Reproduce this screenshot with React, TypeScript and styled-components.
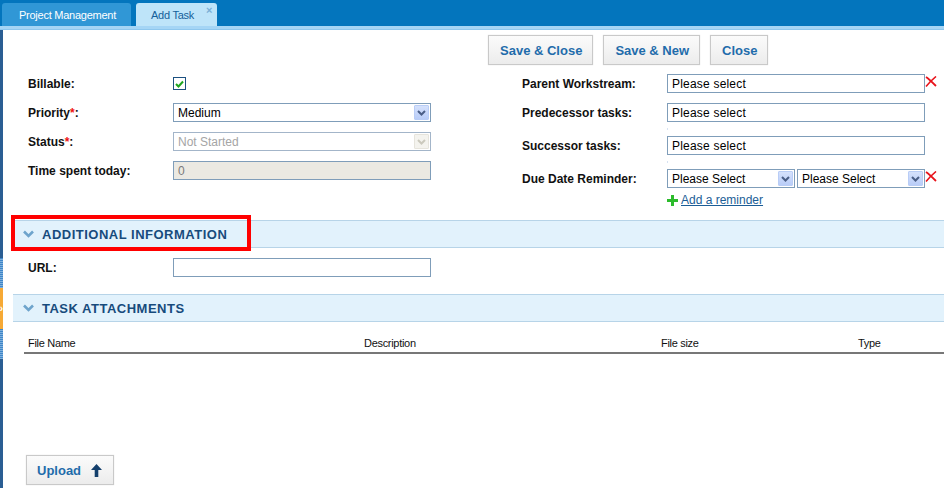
import styled, { createGlobalStyle } from 'styled-components';

const GlobalStyle = createGlobalStyle`
  html, body {
    margin: 0;
    padding: 0;
    background: #ffffff;
    font-family: "Liberation Sans", Arial, sans-serif;
  }
`;

export default function App() {
  return (
    <Page>
      <GlobalStyle />
      <TabBar>
        <Tab>Project Management</Tab>
        <Tab active>
          Add Task
          <TabClose>×</TabClose>
        </Tab>
      </TabBar>
      <TabBand />

      <Body>
        <LeftStrip>
          <SplitterHandle>
            <DottedGrip />
            <OrangeGrip>
              <GripArrow>›</GripArrow>
            </OrangeGrip>
            <DottedGrip />
          </SplitterHandle>
        </LeftStrip>

        <Content>
          <ButtonBar>
            <ActionButton>Save &amp; Close</ActionButton>
            <ActionButton>Save &amp; New</ActionButton>
            <ActionButton>Close</ActionButton>
          </ButtonBar>

          <FormGrid>
            <FormColumn>
              <FieldRow>
                <Label>Billable:</Label>
                <CheckBox>
                  <svg width="9" height="8" viewBox="0 0 9 8">
                    <path d="M1 4 L3.5 6.5 L8 1.5" stroke="#1fa51f" strokeWidth="2" fill="none" />
                  </svg>
                </CheckBox>
              </FieldRow>
              <FieldRow>
                <Label>
                  Priority<Required>*</Required>:
                </Label>
                <SelectBox width={258}>
                  <SelectText>Medium</SelectText>
                  <SelectArrow>
                    <Chevron />
                  </SelectArrow>
                </SelectBox>
              </FieldRow>
              <FieldRow>
                <Label>
                  Status<Required>*</Required>:
                </Label>
                <SelectBox width={258} disabled>
                  <SelectText disabled>Not Started</SelectText>
                  <SelectArrow disabled>
                    <Chevron color="#cbc9bd" />
                  </SelectArrow>
                </SelectBox>
              </FieldRow>
              <FieldRow>
                <Label>Time spent today:</Label>
                <TextBox width={258} disabled>
                  0
                </TextBox>
              </FieldRow>
            </FormColumn>

            <FormColumn>
              <FieldRow>
                <Label>Parent Workstream:</Label>
                <TextBox width={258}>Please select</TextBox>
                <RemoveIcon />
              </FieldRow>
              <FieldRow>
                <Label>Predecessor tasks:</Label>
                <TextBox width={258}>Please select</TextBox>
              </FieldRow>
              <Spacer>
                <SpacerMark />
              </Spacer>
              <FieldRow>
                <Label>Successor tasks:</Label>
                <TextBox width={258}>Please select</TextBox>
              </FieldRow>
              <Spacer>
                <SpacerMark />
              </Spacer>
              <FieldRow>
                <Label>Due Date Reminder:</Label>
                <SelectPair>
                  <SelectBox width={128}>
                    <SelectText>Please Select</SelectText>
                    <SelectArrow>
                      <Chevron />
                    </SelectArrow>
                  </SelectBox>
                  <SelectBox width={128}>
                    <SelectText>Please Select</SelectText>
                    <SelectArrow>
                      <Chevron />
                    </SelectArrow>
                  </SelectBox>
                </SelectPair>
                <RemoveIcon />
              </FieldRow>
              <ReminderRow>
                <svg width="11" height="11" viewBox="0 0 11 11">
                  <rect x="4" y="0" width="3" height="11" fill="#2cbb2c" />
                  <rect x="0" y="4" width="11" height="3" fill="#2cbb2c" />
                </svg>
                <ReminderLink>Add a reminder</ReminderLink>
              </ReminderRow>
            </FormColumn>
          </FormGrid>

          <SectionHeader>
            <SectionChevron />
            <SectionTitle>ADDITIONAL INFORMATION</SectionTitle>
            <Highlight />
          </SectionHeader>

          <UrlRow>
            <Label>URL:</Label>
            <TextBox width={258} />
          </UrlRow>

          <SectionHeader>
            <SectionChevron />
            <SectionTitle>TASK ATTACHMENTS</SectionTitle>
          </SectionHeader>

          <TableHead>
            <HeadCell>File Name</HeadCell>
            <HeadCell>Description</HeadCell>
            <HeadCell>File size</HeadCell>
            <HeadCell>Type</HeadCell>
          </TableHead>

          <UploadButton>
            Upload
            <svg width="11" height="13" viewBox="0 0 11 13">
              <path d="M5.5 0 L11 6 L7.3 6 L7.3 13 L3.7 13 L3.7 6 L0 6 Z" fill="#143f6c" />
            </svg>
          </UploadButton>
        </Content>
      </Body>
    </Page>
  );
}

function Chevron({ color = '#4a5e86' }: { color?: string }) {
  return (
    <svg width="9" height="6" viewBox="0 0 9 6">
      <path d="M1 1 L4.5 4.5 L8 1" stroke={color} strokeWidth="2" fill="none" />
    </svg>
  );
}

function RemoveIcon() {
  return (
    <RemoveWrap>
      <svg width="12" height="11" viewBox="0 0 12 11">
        <path d="M1 1 C4 3 8 7 11 10" stroke="#e8131b" strokeWidth="1.8" fill="none" />
        <path d="M11 0.5 C8 3 4 7 1 10.5" stroke="#e8131b" strokeWidth="1.6" fill="none" />
      </svg>
    </RemoveWrap>
  );
}

function SectionChevron() {
  return (
    <ChevronWrap>
      <svg width="11" height="8" viewBox="0 0 11 8">
        <path d="M1 1.5 L5.5 6 L10 1.5" stroke="#6ea4cc" strokeWidth="2.6" fill="none" />
      </svg>
    </ChevronWrap>
  );
}

const Page = styled.div`
  width: 944px;
  height: 488px;
  overflow: hidden;
  display: flex;
  flex-direction: column;
`;

const TabBar = styled.div`
  height: 26px;
  box-sizing: border-box;
  background: #0375bd;
  display: flex;
  align-items: flex-end;
  gap: 5px;
  padding: 3px 0 0 2px;
`;

const Tab = styled.div<{ active?: boolean }>`
  position: relative;
  height: 23px;
  box-sizing: border-box;
  padding: 0 ${(p) => (p.active ? '23px' : '15px')} 0 ${(p) => (p.active ? '15px' : '17px')};
  display: flex;
  align-items: center;
  border-radius: 3px 3px 0 0;
  font-size: 11px;
  letter-spacing: -0.25px;
  background: ${(p) => (p.active ? '#bee4f9' : '#3097d6')};
  color: ${(p) => (p.active ? '#155f99' : '#ffffff')};
`;

const TabClose = styled.span`
  position: absolute;
  top: 1px;
  right: 5px;
  font-size: 11px;
  font-weight: bold;
  color: #7aaed6;
`;

const TabBand = styled.div`
  height: 3px;
  background: #a5d5f5;
  border-bottom: 1px solid #8ec7ee;
  box-sizing: content-box;
`;

const Body = styled.div`
  flex: 1;
  display: flex;
  min-height: 0;
`;

const LeftStrip = styled.div`
  width: 3px;
  flex: 0 0 3px;
  background: #2a5e93;
  display: flex;
  flex-direction: column;
`;

const SplitterHandle = styled.div`
  margin-top: 228px;
  display: flex;
  flex-direction: column;
`;

const DottedGrip = styled.div`
  height: 30px;
  background: repeating-linear-gradient(180deg, #3f86c8 0 1px, #7fb0dd 1px 2px);
`;

const OrangeGrip = styled.div`
  height: 41px;
  background: #f6a935;
  display: flex;
  align-items: center;
  justify-content: center;
  overflow: hidden;
`;

const GripArrow = styled.span`
  color: #ffffff;
  font-size: 10px;
  font-weight: bold;
  line-height: 1;
`;

const Content = styled.div`
  flex: 1;
  display: flex;
  flex-direction: column;
  min-width: 0;
`;

const ButtonBar = styled.div`
  display: flex;
  gap: 10px;
  padding: 5px 0 0 485px;
`;

const ActionButton = styled.div`
  height: 30px;
  box-sizing: border-box;
  padding: 0 10px 0 11px;
  display: flex;
  align-items: center;
  gap: 10px;
  border: 1px solid #c9c9c9;
  box-shadow: 0 0 1px rgba(0, 0, 0, 0.15);
  background: linear-gradient(180deg, #fbfbfb 0%, #ececec 100%);
  color: #1f6cab;
  font-size: 13px;
  font-weight: bold;
`;

const FormGrid = styled.div`
  display: grid;
  grid-template-columns: 494px 1fr;
  padding: 4px 0 0 25px;
`;

const FormColumn = styled.div`
  display: flex;
  flex-direction: column;
`;

const FieldRow = styled.div`
  height: 29px;
  display: flex;
  align-items: center;
`;

const Label = styled.div`
  width: 145px;
  flex: 0 0 145px;
  font-size: 12px;
  font-weight: bold;
  color: #111111;
`;

const Required = styled.span`
  color: #ee1111;
`;

const CheckBox = styled.div`
  width: 13px;
  height: 13px;
  box-sizing: border-box;
  border: 1px solid #1c5181;
  background: #ffffff;
  display: flex;
  align-items: center;
  justify-content: center;
`;

const SelectBox = styled.div<{ width: number; disabled?: boolean }>`
  width: ${(p) => p.width}px;
  height: 19px;
  box-sizing: border-box;
  border: 1px solid ${(p) => (p.disabled ? '#a3b5c9' : '#7f9db9')};
  background: #ffffff;
  display: flex;
  align-items: center;
  justify-content: space-between;
  padding: 0 1px 0 4px;
`;

const SelectText = styled.span<{ disabled?: boolean }>`
  font-size: 12px;
  color: ${(p) => (p.disabled ? '#a5a5a5' : '#000000')};
  white-space: nowrap;
`;

const SelectArrow = styled.div<{ disabled?: boolean }>`
  width: 15px;
  height: 15px;
  box-sizing: border-box;
  border: 1px solid ${(p) => (p.disabled ? '#e6e4dc' : '#b9cdf6')};
  border-radius: 1px;
  background: ${(p) =>
    p.disabled ? '#f4f3ee' : 'linear-gradient(180deg, #d5e1fc 0%, #b9cdf8 100%)'};
  display: flex;
  align-items: center;
  justify-content: center;
`;

const SelectPair = styled.div`
  display: flex;
  gap: 2px;
`;

const TextBox = styled.div<{ width: number; disabled?: boolean }>`
  width: ${(p) => p.width}px;
  height: 19px;
  box-sizing: border-box;
  border: 1px solid #7f9db9;
  background: ${(p) => (p.disabled ? '#ebe9e2' : '#ffffff')};
  color: ${(p) => (p.disabled ? '#7a7a7a' : '#000000')};
  font-size: 12px;
  padding: 0 4px;
  display: flex;
  align-items: center;
  letter-spacing: 0.2px;
`;

const RemoveWrap = styled.div`
  display: flex;
  align-self: flex-start;
  margin-top: 7px;
`;

const Spacer = styled.div`
  height: 4px;
  padding-left: 145px;
  display: flex;
  align-items: center;
`;

const SpacerMark = styled.div`
  width: 1px;
  height: 2px;
  background: #d6e2f2;
`;

const ReminderRow = styled.div`
  height: 14px;
  display: flex;
  align-items: center;
  gap: 3px;
  padding-left: 145px;
`;

const ReminderLink = styled.span`
  font-size: 12px;
  color: #1b5d96;
  text-decoration: underline;
`;

const SectionHeader = styled.div`
  position: relative;
  margin: 13px 0 0 10px;
  height: 26px;
  box-sizing: content-box;
  background: #e2f2fc;
  border-top: 1px solid #b7d4e8;
  border-bottom: 1px solid #b7d4e8;
  display: flex;
  align-items: center;
  gap: 8px;
  padding-left: 10px;
`;

const ChevronWrap = styled.div`
  display: flex;
`;

const SectionTitle = styled.span`
  font-size: 13px;
  font-weight: bold;
  color: #174b7c;
  letter-spacing: 0.5px;
`;

const Highlight = styled.div`
  position: absolute;
  left: -2px;
  top: -6px;
  width: 240px;
  height: 36px;
  box-sizing: border-box;
  border: 4px solid #ff0000;
`;

const UrlRow = styled.div`
  height: 27px;
  display: flex;
  align-items: center;
  padding: 6px 0 0 25px;
`;

const TableHead = styled.div`
  margin: 15px 0 0 21px;
  display: grid;
  grid-template-columns: 336px 297px 197px 1fr;
  padding: 0 0 3px 4px;
  border-bottom: 2px solid #777777;
`;

const HeadCell = styled.div`
  font-size: 11px;
  color: #111111;
  letter-spacing: -0.3px;
`;

const UploadButton = styled(ActionButton)`
  align-self: flex-start;
  margin: auto 0 3px 23px;
  padding: 0 11px 0 10px;
  gap: 10px;
`;
